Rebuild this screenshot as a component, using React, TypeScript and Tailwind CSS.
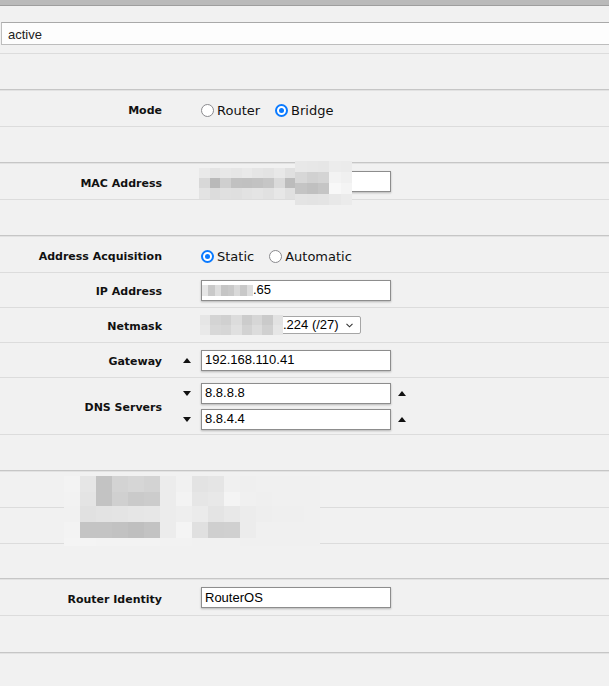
import React from "react";

const LABEL =
  "w-[162px] shrink-0 pt-[5px] text-right font-['DejaVu_Sans',Verdana,sans-serif] text-[11px] font-bold text-[#111]";
const INPUT =
  "flex h-[21px] w-[190px] items-center border border-[#8d8d8d] bg-white px-[3px] font-['Liberation_Sans',Arial,sans-serif] text-[13px] text-black shadow-[0_1px_2px_rgba(0,0,0,0.25)]";

type MosaicRow = { h: string; cells: string[] };

function Mosaic({ rows, cell }: { rows: MosaicRow[]; cell: string }) {
  return (
    <div className="flex flex-col">
      {rows.map((row, i) => (
        <div key={i} className={`flex ${row.h}`}>
          {row.cells.map((bg, j) => (
            <div key={j} className={`${cell} h-full ${bg}`} />
          ))}
        </div>
      ))}
    </div>
  );
}

function Up() {
  return (
    <svg width="8" height="5" viewBox="0 0 8 5" className="block">
      <polygon points="4,0 8,5 0,5" fill="#111" />
    </svg>
  );
}

function Down() {
  return (
    <svg width="8" height="5" viewBox="0 0 8 5" className="block">
      <polygon points="0,0 8,0 4,5" fill="#111" />
    </svg>
  );
}

function Radio({ checked, label, first }: { checked?: boolean; label: string; first?: boolean }) {
  return (
    <label className={`flex items-center pt-[4px] ${first ? "" : "ml-[15px]"}`}>
      {checked ? (
        <span className="flex h-[13px] w-[13px] items-center justify-center rounded-full border-2 border-[#0a7aff] bg-white">
          <span className="h-[5px] w-[5px] rounded-full bg-[#0a7aff]" />
        </span>
      ) : (
        <span className="h-[13px] w-[13px] rounded-full border-[1.5px] border-[#8a8a8e] bg-white" />
      )}
      <span className="ml-[3px] font-['DejaVu_Sans',Verdana,sans-serif] text-[13px] text-[#111]">{label}</span>
    </label>
  );
}

function Row({
  label,
  h = "h-[36px]",
  end,
  lead,
  children,
}: {
  label?: string;
  h?: string;
  end?: boolean;
  lead?: React.ReactNode;
  children?: React.ReactNode;
}) {
  return (
    <>
      <div className={`flex items-center border-b ${h} ${end ? "border-[#c6c6c6]" : "border-[#dcdcdc]"}`}>
        <div className={LABEL}>{label}</div>
        <div className="flex w-[39px] shrink-0 justify-end pr-[10px]">{lead}</div>
        <div className="flex items-center">{children}</div>
      </div>
      {end && <div className="h-px bg-[#e2e2e2]" />}
    </>
  );
}

const macLeft: MosaicRow[] = [
  { h: "h-[10px]", cells: ["bg-[#e9e9e9]", "bg-[#e4e4e4]", "bg-[#e8e8e8]", "bg-[#e6e6e6]", "bg-[#e9e9e9]", "bg-[#e5e5e5]", "bg-[#e3e3e3]", "bg-[#e8e8e8]", "bg-[#e0e0e0]"] },
  { h: "h-[10px]", cells: ["bg-[#d8d8d8]", "bg-[#b9b9b9]", "bg-[#cfcfcf]", "bg-[#c1c1c1]", "bg-[#c0c0c0]", "bg-[#c2c2c2]", "bg-[#c6c6c6]", "bg-[#dadada]", "bg-[#bcbcbc]"] },
  { h: "h-[11px]", cells: ["bg-[#e3e3e3]", "bg-[#dcdcdc]", "bg-[#e0e0e0]", "bg-[#dfdfdf]", "bg-[#e2e2e2]", "bg-[#e4e4e4]", "bg-[#e1e1e1]", "bg-[#e7e7e7]", "bg-[#e0e0e0]"] },
];

const macRight: MosaicRow[] = [
  { h: "h-[11px]", cells: ["bg-[#e8e8e8]", "bg-[#e7e7e7]", "bg-[#e6e6e6]", "bg-[#ececec]", "bg-[#ebebeb]"] },
  { h: "h-[11px]", cells: ["bg-[#d7d7d7]", "bg-[#d1d1d1]", "bg-[#d4d4d4]", "bg-[#f3f3f3]", "bg-[#f0f0f0]"] },
  { h: "h-[11px]", cells: ["bg-[#c4c4c4]", "bg-[#c0c0c0]", "bg-[#c5c5c5]", "bg-[#f8f8f8]", "bg-[#f4f4f4]"] },
  { h: "h-[11px]", cells: ["bg-[#e4e4e4]", "bg-[#e3e3e3]", "bg-[#e4e4e4]", "bg-[#e8e8e8]", "bg-[#ebebeb]"] },
];

const ipBlur: MosaicRow[] = [
  { h: "h-[11px]", cells: ["bg-[#e6e6e6]", "bg-[#c9c9c9]", "bg-[#dedede]", "bg-[#c5c5c5]", "bg-[#c9c9c9]", "bg-[#d9d9d9]", "bg-[#c8c8c8]", "bg-[#dddddd]"] },
];

const maskBlur: MosaicRow[] = [
  { h: "h-[10px]", cells: ["bg-[#e6e6e6]", "bg-[#d4d4d4]", "bg-[#d0d0d0]", "bg-[#dcdcdc]", "bg-[#cccccc]", "bg-[#d6d6d6]", "bg-[#cacaca]", "bg-[#e2e2e2]"] },
  { h: "h-[10px]", cells: ["bg-[#e9e9e9]", "bg-[#d8d8d8]", "bg-[#d6d6d6]", "bg-[#e0e0e0]", "bg-[#d2d2d2]", "bg-[#dcdcdc]", "bg-[#d0d0d0]", "bg-[#e6e6e6]"] },
];

const bigBlur: MosaicRow[] = [
  { h: "h-[16px]", cells: ["bg-[#f3f3f3]", "bg-[#e6e6e6]", "bg-[#c3c3c3]", "bg-[#d3d3d3]", "bg-[#d6d6d6]", "bg-[#d3d3d3]", "bg-[#ececec]", "bg-[#f1f1f1]", "bg-[#e3e3e3]", "bg-[#e5e5e5]", "bg-[#f0f0f0]", "bg-[#efefef]", "bg-[#f0f0f0]", "bg-[#f0f0f0]", "bg-[#f0f0f0]", "bg-[#f0f0f0]"] },
  { h: "h-[14px]", cells: ["bg-[#f2f2f2]", "bg-[#e4e4e4]", "bg-[#c3c3c3]", "bg-[#d0d0d0]", "bg-[#cacaca]", "bg-[#cccccc]", "bg-[#ececec]", "bg-[#f3f3f3]", "bg-[#e6e6e6]", "bg-[#e8e8e8]", "bg-[#f4f4f4]", "bg-[#f0f0f0]", "bg-[#efefef]", "bg-[#f0f0f0]", "bg-[#f0f0f0]", "bg-[#f0f0f0]"] },
  { h: "h-[16px]", cells: ["bg-[#f1f1f1]", "bg-[#e1e1e1]", "bg-[#e3e3e3]", "bg-[#e4e4e4]", "bg-[#e6e6e6]", "bg-[#e7e7e7]", "bg-[#ececec]", "bg-[#eeeeee]", "bg-[#ebebeb]", "bg-[#e4e4e4]", "bg-[#e8e8e8]", "bg-[#ececec]", "bg-[#eeeeee]", "bg-[#efefef]", "bg-[#efefef]", "bg-[#f0f0f0]"] },
  { h: "h-[16px]", cells: ["bg-[#f3f3f3]", "bg-[#c4c4c4]", "bg-[#c4c4c4]", "bg-[#c2c2c2]", "bg-[#bfbfbf]", "bg-[#c3c3c3]", "bg-[#ececec]", "bg-[#f4f4f4]", "bg-[#e0e0e0]", "bg-[#cfcfcf]", "bg-[#d0d0d0]", "bg-[#ececec]", "bg-[#f0f0f0]", "bg-[#f0f0f0]", "bg-[#f0f0f0]", "bg-[#f0f0f0]"] },
  { h: "h-[8px]", cells: ["bg-[#f4f4f4]", "bg-[#f4f4f4]", "bg-[#f3f3f3]", "bg-[#f3f3f3]", "bg-[#f3f3f3]", "bg-[#f3f3f3]", "bg-[#f2f2f2]", "bg-[#f2f2f2]", "bg-[#f1f1f1]", "bg-[#f1f1f1]", "bg-[#f1f1f1]", "bg-[#f0f0f0]", "bg-[#f0f0f0]", "bg-[#f0f0f0]", "bg-[#f0f0f0]", "bg-[#f0f0f0]"] },
];

export default function App() {
  return (
    <div className="min-h-[686px] overflow-hidden bg-[#f1f1f1]">
      <div className="h-[6px] border-b border-[#9e9e9e] bg-[#bababa]" />

      <div className="h-[48px] border-b border-[#dcdcdc] pt-[16px]">
        <div className="ml-px flex h-[23px] w-[620px] items-center border border-[#bdbdbd] border-t-[#a9a9a9] bg-[#fdfdfd] pl-[6px] pt-[2px] font-['Liberation_Sans',Arial,sans-serif] text-[13px] text-[#222]">
          active
        </div>
      </div>

      <Row end />

      <Row label="Mode">
        <Radio first label="Router" />
        <Radio checked label="Bridge" />
      </Row>
      <Row end />

      <div className="relative">
        <Row label="MAC Address">
          <div className={INPUT} />
        </Row>
        <div className="absolute left-[199px] top-[4px] flex items-start">
          <Mosaic rows={macLeft} cell="w-[10.7px]" />
          <div className="-mt-[7px]">
            <Mosaic rows={macRight} cell="w-[11.4px]" />
          </div>
        </div>
      </div>
      <Row end />

      <Row label="Address Acquisition">
        <Radio first checked label="Static" />
        <Radio label="Automatic" />
      </Row>
      <Row label="IP Address" h="h-[35px]">
        <div className={`${INPUT} pl-0`}>
          <div className="w-[51px]">
            <Mosaic rows={ipBlur} cell="w-[6.4px]" />
          </div>
          <span>.65</span>
        </div>
      </Row>
      <Row label="Netmask" h="h-[35px]">
        <div className="relative flex h-[18px] w-[160px] items-center rounded-[2px] border border-[#a6a6a6] bg-white pl-[81px] font-['Liberation_Sans',Arial,sans-serif] text-[13px] text-black">
          <span>.224 (/27)</span>
          <svg width="7" height="5" viewBox="0 0 7 5" className="ml-[7px]">
            <polyline points="0.5,0.8 3.5,3.8 6.5,0.8" fill="none" stroke="#333" strokeWidth="1.1" />
          </svg>
          <div className="absolute -left-[2px] -top-[2px] w-[83px]">
            <Mosaic rows={maskBlur} cell="w-[10.4px]" />
          </div>
        </div>
      </Row>
      <Row label="Gateway" h="h-[35px]" lead={<Up />}>
        <div className={INPUT}>192.168.110.41</div>
      </Row>

      <div className="flex h-[57px] items-center border-b border-[#dcdcdc]">
        <div className={LABEL}>DNS Servers</div>
        <div className="flex flex-col gap-[5px]">
          {["8.8.8.8", "8.8.4.4"].map((v) => (
            <div key={v} className="flex items-center">
              <div className="flex w-[39px] justify-end pr-[10px]">
                <Down />
              </div>
              <div className={INPUT}>{v}</div>
              <div className="ml-[7px]">
                <Up />
              </div>
            </div>
          ))}
        </div>
      </div>
      <Row end />

      <div className="relative">
        <Row />
        <Row />
        <Row h="h-[35px]" end />
        <div className="absolute left-[64px] top-[4px]">
          <Mosaic rows={bigBlur} cell="w-[16px]" />
        </div>
      </div>

      <Row label="Router Identity">
        <div className={INPUT}>RouterOS</div>
      </Row>
      <Row h="h-[37px]" end />
    </div>
  );
}
